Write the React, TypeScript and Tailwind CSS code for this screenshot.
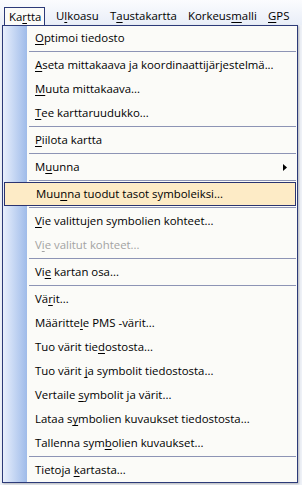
type Item = {
  label: string;
  u: number; // index of the underlined letter
  sep?: boolean;
  disabled?: boolean;
  active?: boolean;
  sub?: boolean;
};

const items: Item[] = [
  { label: "Optimoi tiedosto", u: 0, sep: true },
  { label: "Aseta mittakaava ja koordinaattijärjestelmä...", u: 0 },
  { label: "Muuta mittakaava...", u: 0 },
  { label: "Tee karttaruudukko...", u: 0, sep: true },
  { label: "Piilota kartta", u: 0, sep: true },
  { label: "Muunna", u: 1, sub: true, sep: true },
  { label: "Muunna tuodut tasot symboleiksi...", u: 3, active: true, sep: true },
  { label: "Vie valittujen symbolien kohteet...", u: 0 },
  { label: "Vie valitut kohteet...", u: 1, disabled: true, sep: true },
  { label: "Vie kartan osa...", u: 2, sep: true },
  { label: "Värit...", u: 2 },
  { label: "Määrittele PMS -värit...", u: 8 },
  { label: "Tuo värit tiedostosta...", u: 13 },
  { label: "Tuo värit ja symbolit tiedostosta...", u: 10 },
  { label: "Vertaile symbolit ja värit...", u: 9 },
  { label: "Lataa symbolien kuvaukset tiedostosta...", u: 7 },
  { label: "Tallenna symbolien kuvaukset...", u: 12, sep: true },
  { label: "Tietoja kartasta...", u: 8 },
];

// label, underlined letter, width class of the menubar slot
const menus: [string, number, string][] = [
  ["Kartta", 2, "w-[41px] mr-[6px]"],
  ["Ulkoasu", 1, "w-[54px]"],
  ["Taustakartta", 1, "w-[78px]"],
  ["Korkeusmalli", 7, "w-[80px]"],
  ["GPS", 0, "w-[34px]"],
];

function Mnemonic({ text, u }: { text: string; u: number }) {
  return (
    <>
      {text.slice(0, u)}
      <span className="underline underline-offset-2">{text[u]}</span>
      {text.slice(u + 1)}
    </>
  );
}

export default function App() {
  return (
    <div
      className="w-[302px] h-[485px] overflow-hidden bg-[#eef1f7] text-[11.4px] text-black"
      style={{ fontFamily: '"Open Sans", "Noto Sans", sans-serif' }}
    >
      {/* menubar */}
      <div className="h-[25px] bg-gradient-to-b from-[#fbfcfe] to-[#e9eef8] flex items-end pl-[4px]">
        {menus.map(([m, u, w], i) => (
          <div
            key={m}
            className={
              "h-[18px] shrink-0 flex items-center pl-[4px] leading-none whitespace-nowrap " +
              w +
              (i === 0 ? " border border-[#2c3a78] border-b-0 bg-[#fbfbf8]" : " border border-transparent")
            }
          >
            <Mnemonic text={m} u={u} />
          </div>
        ))}
      </div>

      {/* dropdown */}
      <div className="ml-[2px] w-[296px] border border-[#2c3a78] bg-[#fbfbf8] flex shadow-[1px_1px_2px_rgba(0,0,0,0.25)]">
        <div className="w-[24px] shrink-0 bg-gradient-to-r from-[#e8effc] to-[#9fbbe9]" />
        <div className="flex-1 pr-[1px]">
          {items.map((it) => (
            <div key={it.label}>
              <div
                className={
                  "h-[24px] flex items-center pl-[8px] pr-[8px] " +
                  (it.active ? "bg-[#fdebc6] border border-[#2b3470] -ml-[23px] pl-[31px] " : "") +
                  (it.disabled ? "text-[#a3a3a3]" : "")
                }
              >
                <span className="flex-1 whitespace-nowrap">
                  <Mnemonic text={it.label} u={it.u} />
                </span>
                {it.sub && (
                  <svg width="4" height="7" viewBox="0 0 4 7" className="mr-[1px]">
                    <path d="M0 0 L4 3.5 L0 7 Z" fill="#000" />
                  </svg>
                )}
              </div>
              {it.sep && <div className="h-[1px] bg-[#8d94b5] my-[1px] ml-[2px]" />}
            </div>
          ))}
        </div>
      </div>
    </div>
  );
}
